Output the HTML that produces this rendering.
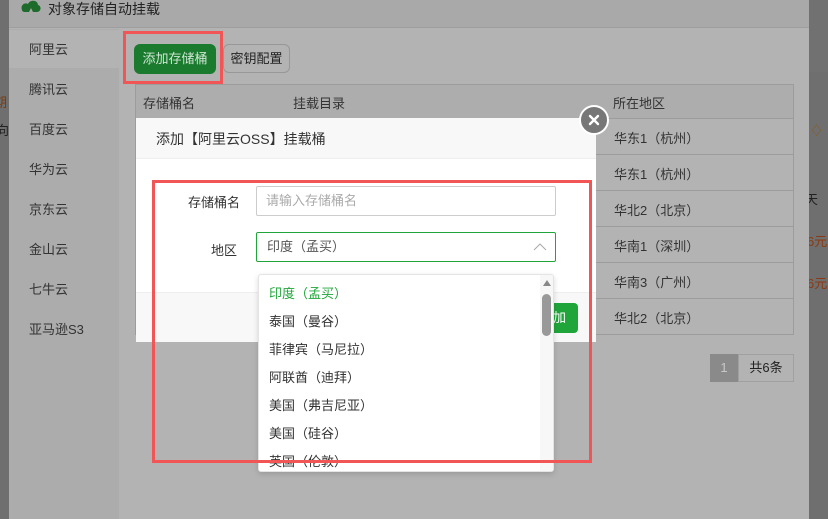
<!DOCTYPE html>
<html><head><meta charset="utf-8"><style>
*{margin:0;padding:0;box-sizing:border-box}
body{width:828px;height:519px;overflow:hidden;background:#6f6f6f;font-family:"Liberation Sans","Noto Sans CJK SC",sans-serif;font-size:13px;color:#333;position:relative}
.a{position:absolute;white-space:nowrap}
.panel{left:9px;top:0;width:800px;height:519px;background:#b3b3b3}
.hdr{left:9px;top:0;width:800px;height:28px;background:#a9a9a9;border-bottom:1px solid #9e9e9e}
.side{left:9px;top:29px;width:110px;height:490px;background:#acacac}
.row{left:135px;width:659px;height:36px;border:1px solid #9c9c9c;border-top:none}
.row span{position:absolute;left:478px;top:9px;color:#333}
.item{position:absolute;left:10px;font-size:13px;color:#333;white-space:nowrap}
</style></head><body>
<div class="a panel"></div>
<div class="a hdr"></div>
<svg class="a" style="left:20px;top:0" width="22" height="14" viewBox="0 0 22 14"><path d="M2 10 C0 5 5 2 8 4 C10 -1 18 0 18 5 C22 6 21 12 17 12 L13 12 L11 8 L9 12 L5 12 C3 12 2 11 2 10Z" fill="#1e6b2b"/></svg>
<div class="a" style="left:48px;top:-1px;font-size:14px;color:#222">对象存储自动挂载</div>
<div class="a side"></div>
<div class="a" style="left:9px;top:30px;width:110px;height:38px;background:#b3b3b3"></div>
<div class="a" style="left:9px;top:30px;width:110px;height:489px">
<div style="position:absolute;left:20px;top:9px">阿里云</div>
<div style="position:absolute;left:20px;top:49px">腾讯云</div>
<div style="position:absolute;left:20px;top:89px">百度云</div>
<div style="position:absolute;left:20px;top:129px">华为云</div>
<div style="position:absolute;left:20px;top:169px">京东云</div>
<div style="position:absolute;left:20px;top:209px">金山云</div>
<div style="position:absolute;left:20px;top:249px">七牛云</div>
<div style="position:absolute;left:20px;top:289px">亚马逊S3</div>
</div>
<div class="a" style="left:0;top:0;width:9px;height:519px;overflow:hidden">
<div class="a" style="left:-6px;top:92px;color:#7a3a10">期</div>
<div class="a" style="left:-4px;top:120px;color:#222">向</div>
</div>
<div class="a" style="left:134px;top:44px;width:82px;height:30px;background:#1a7a2e;border-radius:6px;color:#cfe6d3;text-align:center;line-height:30px">添加存储桶</div>
<div class="a" style="left:223px;top:44px;width:67px;height:29px;border:1px solid #979797;border-radius:6px;color:#222;text-align:center;line-height:27px">密钥配置</div>
<div class="a" style="left:123px;top:31px;width:100px;height:53px;border:3px solid #f25555"></div>
<div class="a" style="left:135px;top:84px;width:659px;height:35px;border:1px solid #9c9c9c;background:#adadad"></div>
<div class="a" style="left:143px;top:93px">存储桶名</div>
<div class="a" style="left:293px;top:93px">挂载目录</div>
<div class="a" style="left:613px;top:93px">所在地区</div>
<div class="a row" style="top:119px"><span>华东1（杭州）</span></div>
<div class="a row" style="top:155px"><span>华东1（杭州）</span></div>
<div class="a row" style="top:191px"><span>华北2（北京）</span></div>
<div class="a row" style="top:227px"><span>华南1（深圳）</span></div>
<div class="a row" style="top:263px"><span>华南3（广州）</span></div>
<div class="a row" style="top:299px"><span>华北2（北京）</span></div>
<div class="a" style="left:710px;top:354px;width:28px;height:28px;background:#8a8a8a;color:#c8c8c8;text-align:center;line-height:28px">1</div>
<div class="a" style="left:738px;top:354px;width:56px;height:28px;border:1px solid #a0a0a0;text-align:center;line-height:26px;color:#222">共6条</div>
<div class="a" style="left:809px;top:0;width:19px;height:519px;overflow:hidden">
<div class="a" style="left:0;top:0;width:19px;height:72px;background:#717171"></div>
<div class="a" style="left:1px;top:120px;color:#8a5a20">♢</div>
<div class="a" style="left:-4px;top:189px;color:#222">天</div>
<div class="a" style="left:-2px;top:231px;color:#8a3a10">6元</div>
<div class="a" style="left:-2px;top:273px;color:#8a3a10">6元</div>
</div>
<!-- modal -->
<div class="a" style="left:136px;top:118px;width:460px;height:224px;background:#fff"></div>
<div class="a" style="left:136px;top:118px;width:460px;height:41px;background:#f8f8f8;border-bottom:1px solid #eee"></div>
<div class="a" style="left:156px;top:129px;font-size:14px;color:#333">添加【阿里云OSS】挂载桶</div>
<div class="a" style="left:136px;top:292px;width:460px;height:50px;background:#f8f8f8;border-top:1px solid #eee"></div>
<div class="a" style="left:540px;top:303px;width:38px;height:30px;background:#20a53a;border-radius:0 4px 4px 0;color:#fff;line-height:30px;text-align:right;padding-right:12px">加</div>
<div class="a" style="left:579px;top:105px;width:30px;height:30px;border-radius:50%;background:#777;border:2px solid #fff"></div>
<svg class="a" style="left:586px;top:112px" width="16" height="16"><path d="M4 4L12 12M12 4L4 12" stroke="#fff" stroke-width="2.4" stroke-linecap="round"/></svg>
<div class="a" style="left:188px;top:192px;color:#333">存储桶名</div>
<div class="a" style="left:256px;top:186px;width:300px;height:30px;border:1px solid #ccc;border-radius:2px;color:#aaa;padding-left:9px;line-height:28px">请输入存储桶名</div>
<div class="a" style="left:211px;top:240px;color:#333">地区</div>
<div class="a" style="left:256px;top:232px;width:300px;height:30px;border:1px solid #20a53a;border-radius:2px;color:#555;padding-left:10px;line-height:27px">印度（孟买）</div>
<svg class="a" style="left:533px;top:242px" width="14" height="10"><path d="M1 8L7 2L13 8" stroke="#aaa" fill="none"/></svg>
<div class="a" style="left:258px;top:274px;width:296px;height:198px;background:#fff;border:1px solid #e4e4e4;border-radius:3px;box-shadow:0 2px 6px rgba(0,0,0,.15);overflow:hidden">
<div class="item" style="top:8px;color:#20a53a">印度（孟买）</div>
<div class="item" style="top:36px">泰国（曼谷）</div>
<div class="item" style="top:64px">菲律宾（马尼拉）</div>
<div class="item" style="top:92px">阿联酋（迪拜）</div>
<div class="item" style="top:120px">美国（弗吉尼亚）</div>
<div class="item" style="top:148px">美国（硅谷）</div>
<div class="item" style="top:176px">英国（伦敦）</div>
<div style="position:absolute;left:281px;top:0;width:14px;height:198px;background:#f7f7f7"></div>
<div style="position:absolute;left:283px;top:19px;width:9px;height:42px;background:#999;border-radius:5px"></div>
<svg style="position:absolute;left:283px;top:4px" width="10" height="8"><path d="M1 7L5 1L9 7Z" fill="#888"/></svg>
</div>
<div class="a" style="left:152px;top:180px;width:440px;height:283px;border:3px solid #f25555"></div>
</body></html>
